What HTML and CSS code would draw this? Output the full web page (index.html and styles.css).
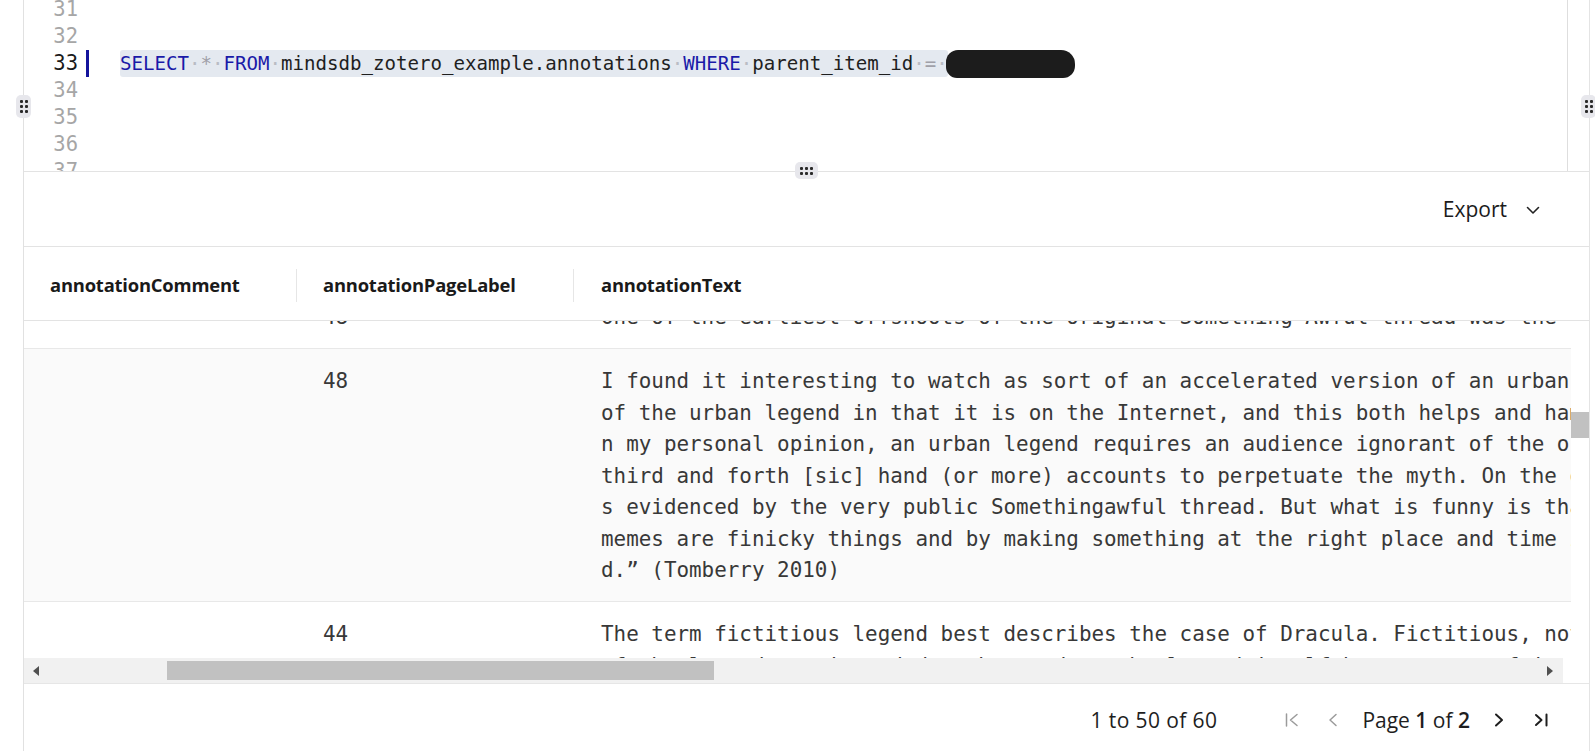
FILE: index.html
```html
<!DOCTYPE html>
<html>
<head>
<meta charset="utf-8">
<link rel="stylesheet" href="styles.css">
</head>
<body>
<div class="frame">
  <div class="handle handle-left"><span></span><span></span><span></span><span></span><span></span><span></span></div>
  <div class="handle handle-right"><span></span><span></span><span></span><span></span><span></span><span></span></div>
  <div class="panel">
    <div class="editor">
      <div class="editor-main">
        <div class="lines">
          <div class="eline"><span class="num">31</span><span class="mark"></span><span class="code"></span></div>
          <div class="eline"><span class="num">32</span><span class="mark"></span><span class="code"></span></div>
          <div class="eline current"><span class="num">33</span><span class="mark on"></span><span class="code"><span class="sel"><span class="kw">SELECT</span><span class="ws">·</span><span class="op">*</span><span class="ws">·</span><span class="kw">FROM</span><span class="ws">·</span>mindsdb_zotero_example.annotations<span class="ws">·</span><span class="kw">WHERE</span><span class="ws">·</span>parent_item_id<span class="ws">·</span><span class="op">=</span><span class="ws">·</span></span><span class="blob"></span></span></div>
          <div class="eline"><span class="num">34</span><span class="mark"></span><span class="code"></span></div>
          <div class="eline"><span class="num">35</span><span class="mark"></span><span class="code"></span></div>
          <div class="eline"><span class="num">36</span><span class="mark"></span><span class="code"></span></div>
          <div class="eline"><span class="num">37</span><span class="mark"></span><span class="code"></span></div>
        </div>
      </div>
    </div>
    <div class="results">
      <div class="handle handle-top"><span></span><span></span><span></span><span></span><span></span><span></span></div>
      <div class="toolbar">
        <span class="export">Export</span>
        <svg class="chev" width="14" height="9" viewBox="0 0 14 9"><path d="M1.5 1.5 L7 7 L12.5 1.5" fill="none" stroke="#222" stroke-width="1.6" stroke-linecap="round" stroke-linejoin="round"/></svg>
      </div>
      <div class="ghead">
        <div class="hcell sep">annotationComment</div>
        <div class="hcell sep">annotationPageLabel</div>
        <div class="hcell last">annotationText</div>
      </div>
      <div class="gbody">
        <div class="viewport">
          <div class="row first">
            <div class="cell"></div>
            <div class="cell">48</div>
            <div class="cell text"><div class="tl">One of the earliest offshoots of the original Something Awful thread was the creation of</div></div>
          </div>
          <div class="row odd">
            <div class="cell"></div>
            <div class="cell">48</div>
            <div class="cell text">
              <div class="tl">I found it interesting to watch as sort of an accelerated version of an urban legend unfold</div>
              <div class="tl">of the urban legend in that it is on the Internet, and this both helps and hampers its spread</div>
              <div class="tl">n my personal opinion, an urban legend requires an audience ignorant of the origins of the</div>
              <div class="tl">third and forth [sic] hand (or more) accounts to perpetuate the myth. On the other hand, as</div>
              <div class="tl">s evidenced by the very public Somethingawful thread. But what is funny is that this shows</div>
              <div class="tl">memes are finicky things and by making something at the right place and time it can spread</div>
              <div class="tl">d.” (Tomberry 2010)</div>
            </div>
          </div>
          <div class="row">
            <div class="cell"></div>
            <div class="cell">44</div>
            <div class="cell text">
              <div class="tl">The term fictitious legend best describes the case of Dracula. Fictitious, not folkloric</div>
              <div class="tl">of the legend was intended to be read as the legend itself became part of it at last” (25)</div>
            </div>
          </div>
        </div>
        <div class="vscroll"><div class="vthumb"></div></div>
      </div>
      <div class="hscroll">
        <div class="htrack">
          <svg class="arrow" width="6" height="10" viewBox="0 0 6 10"><path d="M6 0 L0 5 L6 10 Z" fill="#505050"/></svg>
          <div class="hthumb"></div>
          <svg class="arrow right" width="6" height="10" viewBox="0 0 6 10"><path d="M0 0 L6 5 L0 10 Z" fill="#505050"/></svg>
        </div>
        <div class="corner"></div>
      </div>
      <div class="footer">
        <span class="summary">1 to 50 of 60</span>
        <svg class="pico first" width="14" height="16" viewBox="0 0 14 16"><path d="M1.5 2 V14 M12 2.5 L5.5 8 L12 13.5" fill="none" stroke="#9b9b9b" stroke-width="1.5" stroke-linecap="round" stroke-linejoin="round"/></svg>
        <svg class="pico prev" width="10" height="16" viewBox="0 0 10 16"><path d="M8 2.5 L2 8 L8 13.5" fill="none" stroke="#9b9b9b" stroke-width="1.5" stroke-linecap="round" stroke-linejoin="round"/></svg>
        <span class="pagetext">Page <b class="pb">1</b> of <b class="pb">2</b></span>
        <svg class="pico next" width="10" height="16" viewBox="0 0 10 16"><path d="M2 2.5 L8 8 L2 13.5" fill="none" stroke="#1e1e1e" stroke-width="2" stroke-linecap="round" stroke-linejoin="round"/></svg>
        <svg class="pico last" width="14" height="16" viewBox="0 0 14 16"><path d="M2 3 L7.5 8 L2 13 M12.5 2.5 V13.5" fill="none" stroke="#1e1e1e" stroke-width="2" stroke-linecap="round" stroke-linejoin="round"/></svg>
      </div>
    </div>
  </div>
</div>
</body>
</html>
```

FILE: styles.css
```css
* { box-sizing: border-box; }
body {
  margin: 0;
  background: #fff;
  font-family: "Open Sans", "Noto Sans", sans-serif;
  color: #1e1e1e;
}
.frame {
  position: relative;
  width: 1595px;
  height: 751px;
  overflow: hidden;
}
.panel {
  margin-left: 23px;
  width: 1567px;
  height: 751px;
  border-left: 1px solid #e1e1e1;
  border-right: 1px solid #e4e4e4;
  display: flex;
  flex-direction: column;
}

/* drag handles */
.handle {
  position: absolute;
  background: #e7e7ec;
  border-radius: 5px;
  display: grid;
  gap: 2px;
  place-content: center;
  z-index: 5;
}
.handle span {
  width: 3px;
  height: 3px;
  background: #2a2a2a;
  border-radius: 1px;
}
.handle-left {
  left: 16px;
  top: 95px;
  width: 15px;
  height: 23px;
  grid-template-columns: 3px 3px;
}
.handle-right {
  left: 1581px;
  top: 95px;
  width: 15px;
  height: 23px;
  grid-template-columns: 3px 3px;
}
.handle-top {
  left: 771px;
  top: -10px;
  width: 23px;
  height: 17px;
  grid-template-columns: 3px 3px 3px;
}

/* editor */
.editor {
  flex: none;
  height: 172px;
  border-bottom: 1px solid #e3e3e3;
  display: flex;
  overflow: hidden;
}
.editor-main {
  width: 1544px;
  border-right: 1px solid #dedede;
  overflow: hidden;
}
.lines {
  margin-top: -4px;
}
.eline {
  display: flex;
  height: 27px;
  line-height: 27px;
  white-space: pre;
}
.num {
  width: 54px;
  text-align: right;
  font-family: "DejaVu Sans Mono", monospace;
  font-size: 20.5px;
  color: #a6a6a6;
}
.current .num { color: #1a1a1a; }
.mark {
  width: 3px;
  margin-left: 8px;
  height: 27px;
}
.mark.on { background: #14149c; }
.code {
  margin-left: 31px;
  font-family: "DejaVu Sans Mono", monospace;
  font-size: 19.1px;
  color: #1f1f1f;
  display: flex;
  align-items: center;
}
.sel {
  display: inline-block;
  height: 27px;
  background: #e4e9f0;
  border-radius: 3px;
}
.kw { color: #1a1aa8; }
.op { color: #a0a0a8; }
.ws { color: #b9bcc4; }
.blob {
  display: inline-block;
  width: 129px;
  height: 28px;
  margin-left: -2px;
  background: #1c1c1c;
  border-radius: 12px 14px 12px 11px;
}

/* results */
.results {
  flex: 1;
  position: relative;
  display: flex;
  flex-direction: column;
}
.toolbar {
  flex: none;
  height: 75px;
  border-bottom: 1px solid #e3e3e3;
  display: flex;
  justify-content: flex-end;
  align-items: center;
  padding-right: 49px;
}
.export {
  font-size: 21px;
  color: #1b1b1b;
}
.chev {
  margin-left: 19px;
  margin-top: 2px;
}
.ghead {
  flex: none;
  height: 74px;
  border-bottom: 1px solid #e3e3e3;
  display: grid;
  grid-template-columns: 273px 277px 1fr;
  align-items: center;
}
.hcell {
  position: relative;
  height: 100%;
  display: flex;
  align-items: center;
  padding-left: 26px;
  padding-top: 2px;
  font-weight: 700;
  font-size: 18.4px;
  letter-spacing: -0.2px;
  color: #1a1a1a;
}
.hcell.last { padding-left: 27px; }
.hcell.sep::after {
  content: "";
  position: absolute;
  right: 0;
  top: 22px;
  width: 1px;
  height: 33px;
  background: #e6e6e6;
}
.gbody {
  flex: none;
  height: 337px;
  display: flex;
  overflow: hidden;
}
.viewport {
  width: 1547px;
  overflow: hidden;
}
.row {
  display: grid;
  grid-template-columns: 273px 277px 1fr;
  border-bottom: 1px solid #e8e8e8;
  padding: 17px 0 14.5px;
  font-family: "DejaVu Sans Mono", monospace;
  font-size: 20.9px;
  line-height: 31.5px;
  color: #383838;
}
.row.first { margin-top: -36px; }
.row.odd { background: #fafafa; }
.cell {
  padding-left: 26px;
  overflow: hidden;
}
.cell.text { padding-left: 27px; }
.tl { white-space: pre; }
.vscroll {
  width: 18px;
  background: #fff;
  position: relative;
}
.vthumb {
  position: absolute;
  top: 91px;
  left: 0;
  width: 18px;
  height: 26px;
  background: #c1c1c1;
}
.hscroll {
  flex: none;
  height: 25px;
  display: flex;
}
.htrack {
  width: 1539px;
  background: #f1f1f1;
  display: flex;
  align-items: center;
  position: relative;
}
.arrow {
  margin-left: 9px;
}
.arrow.right {
  margin-left: auto;
  margin-right: 10px;
}
.hthumb {
  position: absolute;
  left: 143px;
  top: 3px;
  width: 547px;
  height: 19px;
  background: #c1c1c1;
}
.corner {
  flex: 1;
  background: #fff;
}
.footer {
  flex: none;
  height: 72px;
  border-top: 1px solid #e6e6e6;
  display: flex;
  justify-content: flex-end;
  align-items: center;
  padding-right: 41px;
  font-size: 21px;
  color: #1e1e1e;
}
.summary { margin-right: 68px; letter-spacing: 0.4px; }
.pico.first { margin-right: 29px; }
.pico.prev { margin-right: 24px; }
.pagetext { margin-right: 24px; }
.pb { font-weight: 600; }
.pico.next { margin-right: 30px; }
```
